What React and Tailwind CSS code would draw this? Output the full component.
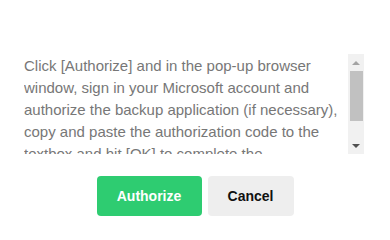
export default function App() {
  return (
    <div className="w-[390px] h-[240px] bg-white flex flex-col pt-[54px] font-['Liberation_Sans',Arial,sans-serif]">
      {/* Instructions box with scrollbar */}
      <div className="flex h-[100px] pl-[24px]">
        <div className="w-[324px] overflow-hidden pt-[1px] pr-[6px] text-[15px] leading-[22px] text-[#777777]">
          Click [Authorize] and in the pop-up browser window, sign in your Microsoft account and authorize the backup application (if necessary), copy and paste the authorization code to the textbox and hit [OK] to complete the authorization process.
        </div>
        <div className="w-[16px] h-[100px] bg-[#f1f1f1] flex flex-col items-center">
          <div className="h-[17px] flex items-center justify-center">
            <div className="w-0 h-0 border-l-[4px] border-r-[4px] border-b-[4px] border-l-transparent border-r-transparent border-b-[#a3a3a3]"></div>
          </div>
          <div className="w-[13px] h-[50px] bg-[#c1c1c1]"></div>
          <div className="flex-1"></div>
          <div className="h-[17px] flex items-center justify-center">
            <div className="w-0 h-0 border-l-[4px] border-r-[4px] border-t-[4px] border-l-transparent border-r-transparent border-t-[#505050]"></div>
          </div>
        </div>
      </div>

      {/* Buttons */}
      <div className="flex justify-center gap-[6px] mt-[22px]">
        <button className="w-[105px] h-[40px] rounded-[4px] bg-[#2ecc71] text-white text-[14px] font-bold">
          Authorize
        </button>
        <button className="w-[86px] h-[40px] rounded-[4px] bg-[#eeeeee] text-[#111111] text-[14px] font-bold">
          Cancel
        </button>
      </div>
    </div>
  );
}
